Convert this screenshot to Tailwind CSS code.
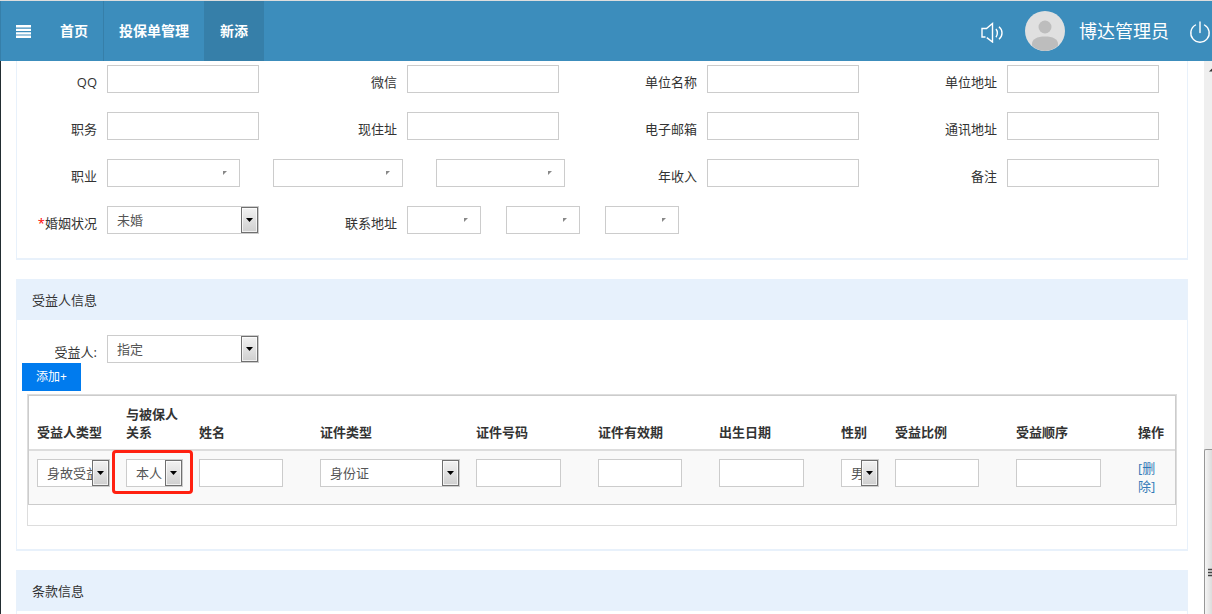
<!DOCTYPE html>
<html lang="zh-CN">
<head>
    <meta charset="UTF-8">
    <meta name="viewport" content="width=device-width, initial-scale=1.0">
    <title>新添投保单</title>
    <script src="https://cdn.jsdelivr.net/npm/@tailwindcss/browser@4"></script>
</head>
<body class="h-screen overflow-hidden flex flex-col bg-white font-['Open_Sans','Noto_Sans_CJK_SC',sans-serif] text-[13px] leading-[18px] text-[#333]">
    <!-- Top bar -->
    <header class="shrink-0 h-[61px] flex items-stretch bg-[#3c8dbc] border-t border-[#ddd] text-white">
        <button type="button" aria-label="菜单" class="w-[45px] flex items-center pl-[15px] border-l border-[#367fa9]">
            <svg class="w-[15px] h-[13px]" viewBox="0 0 15 13" fill="currentColor">
                <path d="M0 0h15v2.5H0zM0 3.8h15v2.2H0zM0 7.2h15v2.2H0zM0 10.6h15V13H0z"/>
            </svg>
        </button>
        <nav class="flex text-sm font-bold">
            <a href="#" class="flex items-center px-[15px] border-r border-[#367fa9]">首页</a>
            <a href="#" class="flex items-center px-[15px]">投保单管理</a>
            <a href="#" class="flex items-center justify-center w-[60px] bg-[#367fa9]">新添</a>
        </nav>
        <div class="ml-auto flex items-center">
            <button type="button" aria-label="声音" class="mr-5">
                <svg class="w-6 h-6" viewBox="0 0 24 24" fill="none" stroke="currentColor" stroke-width="1.4">
                    <path d="M4.500 18H1V9.500H5.500L11.500 4.500V23L5.800 18.600"/>
                    <path d="M15 10c1.800 2.200 1.800 6 0 8.200M18 7.800c4 3.300 4 9.200 0 12.400"/>
                </svg>
            </button>
            <svg class="w-10 h-10 rounded-full mr-[14px]" viewBox="0 0 40 40">
                <rect width="40" height="40" fill="#e0e0e0"/>
                <circle cx="20" cy="16" r="6.500" fill="#bdbdbd"/>
                <path d="M7 33c0-5 5-7.500 13-7.500S33 28 33 33v1.500A19 19 0 0 1 20 40 19 19 0 0 1 7 34.500z" fill="#bdbdbd"/>
            </svg>
            <span class="text-lg mr-5">博达管理员</span>
            <button type="button" aria-label="退出" class="mr-px">
                <svg class="w-[22px] h-6" viewBox="0 0 22 24" fill="none" stroke="currentColor" stroke-width="1.400" stroke-linecap="round">
                    <path d="M11 3V13.500M6.500 6a9.200 9.200 0 1 0 9 0"/>
                </svg>
            </button>
        </div>
    </header>

    <div class="flex-1 min-h-0 flex">
        <main class="flex-1 min-w-0 overflow-hidden border-l border-[#222d32] pl-[15px] pr-4">
            <!-- Applicant -->
            <section class="h-[199px] border-x border-b-2 border-[#e8f1fb] pt-1">
                <div class="grid grid-cols-4 gap-x-[58px] gap-y-[19px] pr-7">
                    <div class="flex gap-2.5">
                        <label for="qq" class="w-20 shrink-0 pt-2 text-right">QQ</label>
                        <input id="qq" type="text" class="h-7 min-w-0 flex-1 border border-[#ccc] px-2">
                    </div>
                    <div class="flex gap-2.5">
                        <label for="wechat" class="w-20 shrink-0 pt-2 text-right">微信</label>
                        <input id="wechat" type="text" class="h-7 min-w-0 flex-1 border border-[#ccc] px-2">
                    </div>
                    <div class="flex gap-2.5">
                        <label for="company" class="w-20 shrink-0 pt-2 text-right">单位名称</label>
                        <input id="company" type="text" class="h-7 min-w-0 flex-1 border border-[#ccc] px-2">
                    </div>
                    <div class="flex gap-2.5">
                        <label for="company-addr" class="w-20 shrink-0 pt-2 text-right">单位地址</label>
                        <input id="company-addr" type="text" class="h-7 min-w-0 flex-1 border border-[#ccc] px-2">
                    </div>

                    <div class="flex gap-2.5">
                        <label for="post" class="w-20 shrink-0 pt-2 text-right">职务</label>
                        <input id="post" type="text" class="h-7 min-w-0 flex-1 border border-[#ccc] px-2">
                    </div>
                    <div class="flex gap-2.5">
                        <label for="home" class="w-20 shrink-0 pt-2 text-right">现住址</label>
                        <input id="home" type="text" class="h-7 min-w-0 flex-1 border border-[#ccc] px-2">
                    </div>
                    <div class="flex gap-2.5">
                        <label for="email" class="w-20 shrink-0 pt-2 text-right">电子邮箱</label>
                        <input id="email" type="text" class="h-7 min-w-0 flex-1 border border-[#ccc] px-2">
                    </div>
                    <div class="flex gap-2.5">
                        <label for="mail-addr" class="w-20 shrink-0 pt-2 text-right">通讯地址</label>
                        <input id="mail-addr" type="text" class="h-7 min-w-0 flex-1 border border-[#ccc] px-2">
                    </div>

                    <div class="col-span-2 -mr-1.5 flex gap-2.5">
                        <label for="job1" class="w-20 shrink-0 pt-2 text-right">职业</label>
                        <div class="flex-1 flex gap-[33px]">
                            <div class="relative w-[133px]">
                                <select id="job1" class="appearance-none block w-full h-7 border border-[#ccc] bg-white px-2"><option></option></select>
                                <svg class="absolute right-[13px] top-3 w-1 h-1 pointer-events-none" viewBox="0 0 4 4"><path d="M0 0h4L0 4z" fill="#888"/></svg>
                            </div>
                            <div class="relative flex-1">
                                <select aria-label="职业二级" class="appearance-none block w-full h-7 border border-[#ccc] bg-white px-2"><option></option></select>
                                <svg class="absolute right-[13px] top-3 w-1 h-1 pointer-events-none" viewBox="0 0 4 4"><path d="M0 0h4L0 4z" fill="#888"/></svg>
                            </div>
                            <div class="relative flex-1">
                                <select aria-label="职业三级" class="appearance-none block w-full h-7 border border-[#ccc] bg-white px-2"><option></option></select>
                                <svg class="absolute right-[13px] top-3 w-1 h-1 pointer-events-none" viewBox="0 0 4 4"><path d="M0 0h4L0 4z" fill="#888"/></svg>
                            </div>
                        </div>
                    </div>
                    <div class="flex gap-2.5">
                        <label for="income" class="w-20 shrink-0 pt-2 text-right">年收入</label>
                        <input id="income" type="text" class="h-7 min-w-0 flex-1 border border-[#ccc] px-2">
                    </div>
                    <div class="flex gap-2.5">
                        <label for="remark" class="w-20 shrink-0 pt-2 text-right">备注</label>
                        <input id="remark" type="text" class="h-7 min-w-0 flex-1 border border-[#ccc] px-2">
                    </div>

                    <div class="flex gap-2.5">
                        <label for="marriage" class="w-20 shrink-0 pt-2 text-right"><span class="text-[#f00]">*</span>婚姻状况</label>
                        <div class="relative flex-1">
                            <select id="marriage" class="appearance-none block w-full h-7 border border-[#ccc] bg-white pl-[9px] pr-5 text-[#555]"><option>未婚</option></select>
                            <span class="absolute right-px top-px w-[17px] h-[26px] flex items-center justify-center border border-[#707070] bg-linear-to-b from-[#f2f2f2] to-[#cfcfcf] inset-ring inset-ring-white/70 pointer-events-none">
                                <svg class="w-[7px] h-1" viewBox="0 0 7 4"><path d="M0 0h7L3.500 4z" fill="#000"/></svg>
                            </span>
                        </div>
                    </div>
                    <div class="col-span-2 flex gap-2.5">
                        <label for="province" class="w-20 shrink-0 pt-2 text-right">联系地址</label>
                        <div class="flex gap-[25px]">
                            <div class="relative w-[74px]">
                                <select id="province" class="appearance-none block w-full h-7 border border-[#ccc] bg-white px-2"><option></option></select>
                                <svg class="absolute right-[13px] top-3 w-1 h-1 pointer-events-none" viewBox="0 0 4 4"><path d="M0 0h4L0 4z" fill="#888"/></svg>
                            </div>
                            <div class="relative w-[74px]">
                                <select aria-label="市" class="appearance-none block w-full h-7 border border-[#ccc] bg-white px-2"><option></option></select>
                                <svg class="absolute right-[13px] top-3 w-1 h-1 pointer-events-none" viewBox="0 0 4 4"><path d="M0 0h4L0 4z" fill="#888"/></svg>
                            </div>
                            <div class="relative w-[74px]">
                                <select aria-label="区" class="appearance-none block w-full h-7 border border-[#ccc] bg-white px-2"><option></option></select>
                                <svg class="absolute right-[13px] top-3 w-1 h-1 pointer-events-none" viewBox="0 0 4 4"><path d="M0 0h4L0 4z" fill="#888"/></svg>
                            </div>
                        </div>
                    </div>
                </div>
            </section>

            <!-- Beneficiary -->
            <section class="mt-[19px] border-x border-b-2 border-[#e8f1fb] pb-[23px]">
                <h2 class="h-[41px] flex items-center px-[15px] bg-[#e7f1fc]">受益人信息</h2>
                <div class="mt-[15px] flex gap-2.5">
                    <label for="beneficiary" class="w-20 shrink-0 pt-2 text-right">受益人:</label>
                    <div class="relative w-[152px]">
                        <select id="beneficiary" class="appearance-none block w-full h-7 border border-[#ccc] bg-white pl-[9px] pr-5 text-[#555]"><option>指定</option></select>
                        <span class="absolute right-px top-px w-[17px] h-[26px] flex items-center justify-center border border-[#707070] bg-linear-to-b from-[#f2f2f2] to-[#cfcfcf] inset-ring inset-ring-white/70 pointer-events-none">
                            <svg class="w-[7px] h-1" viewBox="0 0 7 4"><path d="M0 0h7L3.500 4z" fill="#000"/></svg>
                        </span>
                    </div>
                </div>
                <button type="button" class="ml-[5px] w-[59px] h-7 block bg-[#007bee] text-xs text-white">添加+</button>

                <div class="mt-[3px] mx-[10px] border border-[#ddd] pb-5">
                    <table class="w-full table-fixed border-separate border-spacing-0 border border-[#ccc] text-left">
                        <colgroup>
                            <col class="w-[89px]">
                            <col class="w-[73px]">
                            <col class="w-[121px]">
                            <col class="w-[156px]">
                            <col class="w-[122px]">
                            <col class="w-[121px]">
                            <col class="w-[122px]">
                            <col class="w-[54px]">
                            <col class="w-[121px]">
                            <col class="w-[122px]">
                            <col>
                        </colgroup>
                        <thead>
                            <tr class="align-bottom">
                                <th class="p-2 pt-[9px] border-b-2 border-[#ddd]">受益人类型</th>
                                <th class="p-2 pt-[9px] border-b-2 border-[#ddd]">与被保人关系</th>
                                <th class="p-2 pt-[9px] border-b-2 border-[#ddd]">姓名</th>
                                <th class="p-2 pt-[9px] border-b-2 border-[#ddd]">证件类型</th>
                                <th class="p-2 pt-[9px] border-b-2 border-[#ddd]">证件号码</th>
                                <th class="p-2 pt-[9px] border-b-2 border-[#ddd]">证件有效期</th>
                                <th class="p-2 pt-[9px] border-b-2 border-[#ddd]">出生日期</th>
                                <th class="p-2 pt-[9px] border-b-2 border-[#ddd]">性别</th>
                                <th class="p-2 pt-[9px] border-b-2 border-[#ddd]">受益比例</th>
                                <th class="p-2 pt-[9px] border-b-2 border-[#ddd]">受益顺序</th>
                                <th class="p-2 pt-[9px] border-b-2 border-[#ddd]">操作</th>
                            </tr>
                        </thead>
                        <tbody>
                            <tr class="align-top h-[53px] bg-[#f9f9f9]">
                                <td class="p-2">
                                    <div class="relative">
                                        <select aria-label="受益人类型" class="appearance-none block w-full h-7 border border-[#ccc] bg-white pl-[9px] text-[#555]"><option>身故受益人</option></select>
                                        <span class="absolute right-px top-px w-[17px] h-[26px] flex items-center justify-center border border-[#707070] bg-linear-to-b from-[#f2f2f2] to-[#cfcfcf] inset-ring inset-ring-white/70 pointer-events-none">
                                            <svg class="w-[7px] h-1" viewBox="0 0 7 4"><path d="M0 0h7L3.500 4z" fill="#000"/></svg>
                                        </span>
                                    </div>
                                </td>
                                <td class="relative p-2">
                                    <div class="relative">
                                        <select aria-label="与被保人关系" class="appearance-none block w-full h-7 border border-[#ccc] bg-white pl-[9px] text-[#555]"><option>本人</option></select>
                                        <span class="absolute right-px top-px w-[17px] h-[26px] flex items-center justify-center border border-[#707070] bg-linear-to-b from-[#f2f2f2] to-[#cfcfcf] inset-ring inset-ring-white/70 pointer-events-none">
                                            <svg class="w-[7px] h-1" viewBox="0 0 7 4"><path d="M0 0h7L3.500 4z" fill="#000"/></svg>
                                        </span>
                                    </div>
                                    <!-- highlight frame -->
                                    <div class="absolute -left-1.5 -right-0.5 -top-px h-11 border-3 border-[#ff2010] rounded-sm pointer-events-none"></div>
                                </td>
                                <td class="p-2"><input type="text" aria-label="姓名" class="block w-4/5 h-7 border border-[#ccc] bg-white px-2"></td>
                                <td class="p-2">
                                    <div class="relative">
                                        <select aria-label="证件类型" class="appearance-none block w-full h-7 border border-[#ccc] bg-white pl-[9px] text-[#555]"><option>身份证</option></select>
                                        <span class="absolute right-px top-px w-[17px] h-[26px] flex items-center justify-center border border-[#707070] bg-linear-to-b from-[#f2f2f2] to-[#cfcfcf] inset-ring inset-ring-white/70 pointer-events-none">
                                            <svg class="w-[7px] h-1" viewBox="0 0 7 4"><path d="M0 0h7L3.500 4z" fill="#000"/></svg>
                                        </span>
                                    </div>
                                </td>
                                <td class="p-2"><input type="text" aria-label="证件号码" class="block w-4/5 h-7 border border-[#ccc] bg-white px-2"></td>
                                <td class="p-2"><input type="text" aria-label="证件有效期" class="block w-4/5 h-7 border border-[#ccc] bg-white px-2"></td>
                                <td class="p-2"><input type="text" aria-label="出生日期" class="block w-4/5 h-7 border border-[#ccc] bg-white px-2"></td>
                                <td class="p-2">
                                    <div class="relative">
                                        <select aria-label="性别" class="appearance-none block w-full h-7 border border-[#ccc] bg-white pl-[9px] text-[#555]"><option>男</option></select>
                                        <span class="absolute right-px top-px w-[17px] h-[26px] flex items-center justify-center border border-[#707070] bg-linear-to-b from-[#f2f2f2] to-[#cfcfcf] inset-ring inset-ring-white/70 pointer-events-none">
                                            <svg class="w-[7px] h-1" viewBox="0 0 7 4"><path d="M0 0h7L3.500 4z" fill="#000"/></svg>
                                        </span>
                                    </div>
                                </td>
                                <td class="p-2"><input type="text" aria-label="受益比例" class="block w-4/5 h-7 border border-[#ccc] bg-white px-2"></td>
                                <td class="p-2"><input type="text" aria-label="受益顺序" class="block w-4/5 h-7 border border-[#ccc] bg-white px-2"></td>
                                <td class="p-2"><a href="#" class="block w-5 text-[#337ab7]">[删除]</a></td>
                            </tr>
                        </tbody>
                    </table>
                </div>
            </section>

            <!-- Clauses -->
            <section class="mt-[19px] h-40 border-x border-[#e8f1fb]">
                <h2 class="h-[41px] flex items-center px-[15px] bg-[#e7f1fc]">条款信息</h2>
            </section>
        </main>

        <!-- Scroll track -->
        <div class="w-2 shrink-0 flex flex-col bg-[#efefef] overflow-hidden" aria-hidden="true">
            <svg class="w-2 h-[388px] shrink-0" viewBox="0 0 8 388"><path d="M5 10.500L8 7.500v3z" fill="#333"/></svg>
            <div class="flex-1 border-l border-t border-[#979797] rounded-tl-xs bg-linear-to-r from-[#f5f5f5] to-[#dcdcdc]">
                <svg class="w-[7px] h-[130px]" viewBox="0 0 7 130"><path d="M3 119.500h4M3 122.500h4M3 125.500h4" stroke="#444" stroke-width="1.500"/></svg>
            </div>
        </div>
    </div>
</body>
</html>
